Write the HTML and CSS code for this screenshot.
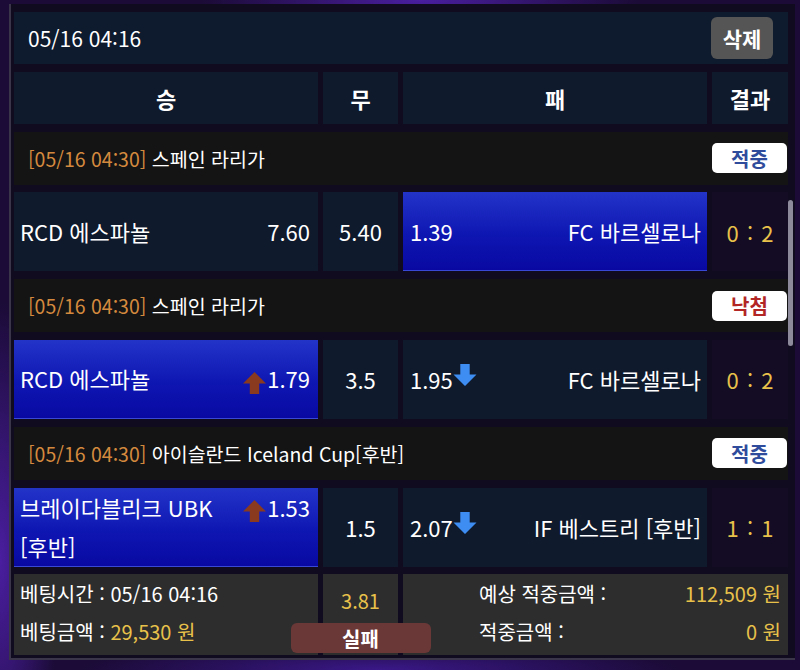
FILE: index.html
```html
<!DOCTYPE html>
<html lang="ko">
<head>
    <meta charset="UTF-8">
    <meta name="viewport" content="width=device-width, initial-scale=1.0">
    <title>베팅 내역</title>
    <link rel="stylesheet" href="styles.css">
</head>
<body>
    <div class="frame">
        <div class="slip">
            <div class="slip-head">
                <span class="slip-time">05/16 04:16</span>
                <button class="btn-delete">삭제</button>
            </div>

            <div class="row cols">
                <div class="cell head">승</div>
                <div class="cell head">무</div>
                <div class="cell head">패</div>
                <div class="cell head">결과</div>
            </div>

            <!-- 경기 1 -->
            <div class="league">
                <span class="league-name"><span class="league-time">[05/16 04:30]</span> 스페인 라리가</span>
                <span class="badge hit">적중</span>
            </div>
            <div class="row match">
                <div class="cell odd home">
                    <span class="team">RCD 에스파뇰</span>
                    <span class="rate">7.60</span>
                </div>
                <div class="cell odd draw">5.40</div>
                <div class="cell odd away selected">
                    <span class="rate">1.39</span>
                    <span class="team">FC 바르셀로나</span>
                </div>
                <div class="cell score">0 : 2</div>
            </div>

            <!-- 경기 2 -->
            <div class="league">
                <span class="league-name"><span class="league-time">[05/16 04:30]</span> 스페인 라리가</span>
                <span class="badge miss">낙첨</span>
            </div>
            <div class="row match">
                <div class="cell odd home selected">
                    <span class="team">RCD 에스파뇰</span>
                    <span class="rate"><svg class="arrow up" viewBox="0 0 22 22"><path d="M11 1 L22 12 H15.5 V22 H6.5 V12 H0 Z"/></svg>1.79</span>
                </div>
                <div class="cell odd draw">3.5</div>
                <div class="cell odd away">
                    <span class="rate">1.95<svg class="arrow down" viewBox="0 0 22 22"><path d="M6.5 0 H15.5 V10 H22 L11 21 L0 10 H6.5 Z"/></svg></span>
                    <span class="team">FC 바르셀로나</span>
                </div>
                <div class="cell score">0 : 2</div>
            </div>

            <!-- 경기 3 -->
            <div class="league">
                <span class="league-name"><span class="league-time">[05/16 04:30]</span> 아이슬란드 Iceland Cup[후반]</span>
                <span class="badge hit">적중</span>
            </div>
            <div class="row match">
                <div class="cell odd home selected top">
                    <span class="team">브레이다블리크 UBK [후반]</span>
                    <span class="rate"><svg class="arrow up" viewBox="0 0 22 22"><path d="M11 1 L22 12 H15.5 V22 H6.5 V12 H0 Z"/></svg>1.53</span>
                </div>
                <div class="cell odd draw">1.5</div>
                <div class="cell odd away">
                    <span class="rate">2.07<svg class="arrow down" viewBox="0 0 22 22"><path d="M6.5 0 H15.5 V10 H22 L11 21 L0 10 H6.5 Z"/></svg></span>
                    <span class="team">IF 베스트리 [후반]</span>
                </div>
                <div class="cell score">1 : 1</div>
            </div>

            <!-- 합계 -->
            <div class="row summary">
                <div class="sum-box sum-info">
                    <div>베팅시간 : 05/16 04:16</div>
                    <div>베팅금액 : <span class="gold">29,530 원</span></div>
                </div>
                <div class="sum-box sum-rate">
                    <span class="gold">3.81</span>
                    <button class="btn-result">실패</button>
                </div>
                <div class="sum-box sum-win">
                    <div class="sum-line"><span>예상 적중금액 :</span><span class="gold">112,509 원</span></div>
                    <div class="sum-line"><span>적중금액 :</span><span class="gold">0 원</span></div>
                </div>
            </div>
        </div>
        <div class="scrollbar"></div>
    </div>
</body>
</html>
```

FILE: styles.css
```css
body {
    margin: 0;
    padding: 0;
    height: 670px;
    overflow: hidden;
    font-family: "Noto Sans CJK KR", "Noto Sans", sans-serif;
    color: #fff;
    background-color: #1b0b36;
    background-image:
        radial-gradient(ellipse 220px 40px at 420px 0px, #4a1ea0 0%, rgba(74,30,160,0) 100%),
        radial-gradient(ellipse 60px 260px at 0px 560px, #4a1ea0 0%, rgba(74,30,160,0) 100%),
        radial-gradient(ellipse 300px 30px at 380px 670px, #3a1888 0%, rgba(58,24,136,0) 100%);
}
.frame {
    position: relative;
    margin: 4px 5px 0 9px;
    height: 656px;
    padding: 8px 7px 0 3px;
    border-left: 2px solid #3a3548;
    border-bottom: 2px solid #3a3548;
    background-color: #110b1f;
    box-sizing: border-box;
}
.slip {
    display: flex;
    flex-direction: column;
    gap: 7.8px;
}
.slip-head {
    height: 52px;
    display: flex;
    align-items: center;
    justify-content: space-between;
    padding: 0 15px 0 14px;
    background-color: #0e1a2d;
}
.slip-time {
    font-size: 21px;
}
.btn-delete {
    width: 62px;
    height: 42px;
    border: none;
    border-radius: 6px;
    background-color: #555555;
    color: #fff;
    font-family: inherit;
    font-size: 21px;
    font-weight: bold;
    padding: 0;
}
.row {
    display: grid;
    grid-template-columns: 304px 75px 304px 76px;
    column-gap: 5px;
}
.cell {
    display: flex;
    align-items: center;
    background-color: #0f1a2d;
    font-size: 22px;
}
.head {
    height: 52px;
    justify-content: center;
    font-weight: bold;
}
.league {
    height: 53px;
    display: flex;
    align-items: center;
    justify-content: space-between;
    padding: 0 1px 0 14px;
    background-color: #141414;
    font-size: 19.5px;
}
.league-time {
    color: #d48a3e;
}
.badge {
    width: 75px;
    height: 30px;
    display: flex;
    align-items: center;
    justify-content: center;
    border-radius: 5px;
    background-color: #fff;
    font-size: 20px;
    font-weight: bold;
}
.hit {
    color: #2f4c9c;
}
.miss {
    color: #b32626;
}
.match {
    height: 79px;
}
.odd {
    line-height: 39px;
    justify-content: space-between;
}
.home {
    padding: 0 8px 0 6px;
}
.away {
    padding: 0 6px 0 7px;
}
.draw {
    justify-content: center;
}
.top {
    align-items: flex-start;
}
.team {
    flex: 1;
    word-break: keep-all;
}
.away .team {
    text-align: right;
}
.rate {
    display: flex;
    align-items: center;
    white-space: nowrap;
}
.selected {
    background: linear-gradient(180deg, #2334c9 0%, #0e16b2 55%, #0909a2 100%);
    border-bottom: 1px solid #3a48d6;
    box-sizing: border-box;
}
.arrow {
    width: 23px;
    height: 23px;
}
.arrow.up {
    fill: #8a3a1e;
    margin-right: 1px;
    margin-top: 7px;
}
.arrow.down {
    fill: #3d8df2;
    width: 24px;
    margin-top: -7px;
}
.score {
    justify-content: center;
    background-color: #140c25;
    color: #e8c14a;
    letter-spacing: 1px;
    padding-left: 1px;
}
.summary {
    height: 81px;
    font-size: 20px;
}
.sum-box {
    background-color: #2d2d2d;
}
.sum-info {
    display: flex;
    flex-direction: column;
    gap: 10px;
    padding: 6px 0 0 6px;
    line-height: 28px;
}
.sum-rate {
    display: flex;
    flex-direction: column;
    align-items: center;
    justify-content: space-between;
    padding: 12px 0 2px;
}
.btn-result {
    position: relative;
    z-index: 1;
    width: 140px;
    height: 30px;
    flex-shrink: 0;
    border: none;
    border-radius: 6px;
    background-color: #6b3838;
    color: #fff;
    font-family: inherit;
    font-size: 20px;
    font-weight: bold;
    padding: 0;
}
.sum-win {
    grid-column: 3 / 5;
    display: flex;
    flex-direction: column;
    gap: 10px;
    padding: 6px 7px 0 76px;
    line-height: 28px;
}
.sum-line {
    display: flex;
    justify-content: space-between;
}
.gold {
    color: #e8c14a;
}
.scrollbar {
    position: absolute;
    left: 777px;
    top: 196px;
    width: 5px;
    height: 146px;
    border-radius: 3px;
    background-color: #8d8a9b;
}
```
